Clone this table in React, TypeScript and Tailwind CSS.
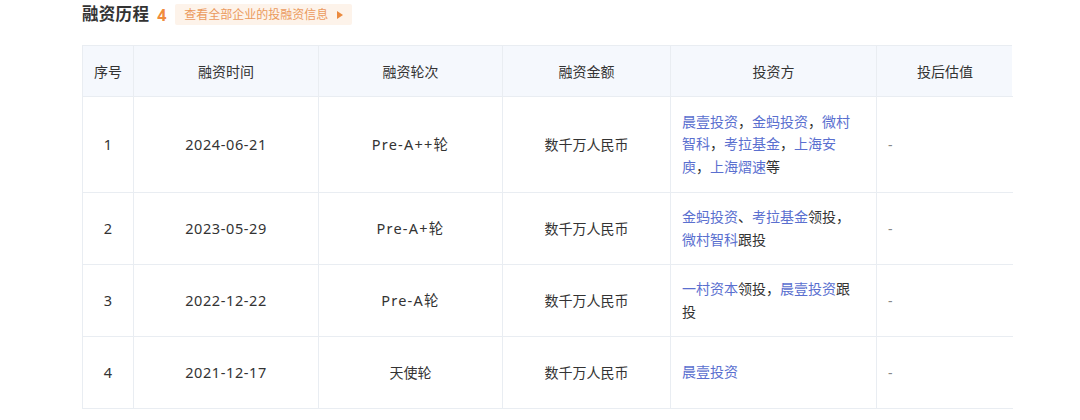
import React from "react";

type Part = { t: string; link?: boolean };

const rows: { no: string; date: string; round: string; latin: boolean; amount: string; inv: Part[] }[] = [
  {
    no: "1",
    date: "2024-06-21",
    round: "Pre-A++轮",
    latin: true,
    amount: "数千万人民币",
    inv: [
      { t: "晨壹投资", link: true },
      { t: "，" },
      { t: "金蚂投资", link: true },
      { t: "，" },
      { t: "微村智科", link: true },
      { t: "，" },
      { t: "考拉基金", link: true },
      { t: "，" },
      { t: "上海安庾", link: true },
      { t: "，" },
      { t: "上海熠速", link: true },
      { t: "等" },
    ],
  },
  {
    no: "2",
    date: "2023-05-29",
    round: "Pre-A+轮",
    latin: true,
    amount: "数千万人民币",
    inv: [
      { t: "金蚂投资", link: true },
      { t: "、" },
      { t: "考拉基金", link: true },
      { t: "领投，" },
      { t: "微村智科", link: true },
      { t: "跟投" },
    ],
  },
  {
    no: "3",
    date: "2022-12-22",
    round: "Pre-A轮",
    latin: true,
    amount: "数千万人民币",
    inv: [
      { t: "一村资本", link: true },
      { t: "领投，" },
      { t: "晨壹投资", link: true },
      { t: "跟投" },
    ],
  },
  {
    no: "4",
    date: "2021-12-17",
    round: "天使轮",
    latin: false,
    amount: "数千万人民币",
    inv: [{ t: "晨壹投资", link: true }],
  },
];

const cols = "grid grid-cols-[51px_185px_184px_168px_206px_136px]";

export default function App() {
  return (
    <div
      className="w-[1080px] h-[420px] bg-white overflow-hidden text-[#333]"
      style={{ fontFamily: '"Noto Sans", "Noto Sans CJK SC", sans-serif' }}
    >
      <div className="flex items-center h-[28px] pl-[82px] pt-[1px]">
        <span className="text-[16.5px] font-bold text-[#333] tracking-[0.3px]">融资历程</span>
        <span className="ml-[8px] text-[16px] font-bold text-[#f08c3c]">4</span>
        <span className="ml-[9px] flex items-center h-[21px] px-[9px] bg-[#fdf3ea] text-[12px] text-[#eb9a5d] rounded-[2px]">
          查看全部企业的投融资信息
          <svg width="6" height="8" viewBox="0 0 6 8" className="ml-[9px]">
            <path d="M0 0 L6 4 L0 8 Z" fill="#eb8a3e" />
          </svg>
        </span>
      </div>
      <div className="ml-[82px] mt-[17px] w-[930px] border-t border-l border-[#e9edf2] text-[14px]">
        <div className={`${cols} h-[51px] bg-[#f5f8fd]`}>
          {["序号", "融资时间", "融资轮次", "融资金额", "投资方", "投后估值"].map((h, i) => (
            <div
              key={h}
              className={`flex items-center justify-center border-b border-[#e9edf2] ${i < 5 ? "border-r" : ""}`}
            >
              {h}
            </div>
          ))}
        </div>
        {rows.map((r, idx) => (
          <div key={r.no} className={`${cols} ${idx === 0 ? "h-[96px]" : "h-[72px]"}`}>
            <div className="flex items-center justify-center border-r border-b border-[#e9edf2] text-[14.5px]">{r.no}</div>
            <div className="flex items-center justify-center border-r border-b border-[#e9edf2] text-[14.5px] tracking-[0.6px]">{r.date}</div>
            <div
              className={`flex items-center justify-center border-r border-b border-[#e9edf2] ${
                r.latin ? "text-[14.5px] tracking-[1.2px]" : ""
              }`}
            >
              {r.round}
            </div>
            <div className="flex items-center justify-center border-r border-b border-[#e9edf2]">{r.amount}</div>
            <div className="flex items-center pl-[11px] pr-[14px] border-r border-b border-[#e9edf2]">
              <p className="leading-[22.5px]">
                {r.inv.map((p, i) => (
                  <span key={i} className={p.link ? "text-[#5a6fcf]" : ""}>
                    {p.t}
                  </span>
                ))}
              </p>
            </div>
            <div className="flex items-center pl-[11px] border-b border-[#e9edf2] text-[#888]">-</div>
          </div>
        ))}
      </div>
    </div>
  );
}
